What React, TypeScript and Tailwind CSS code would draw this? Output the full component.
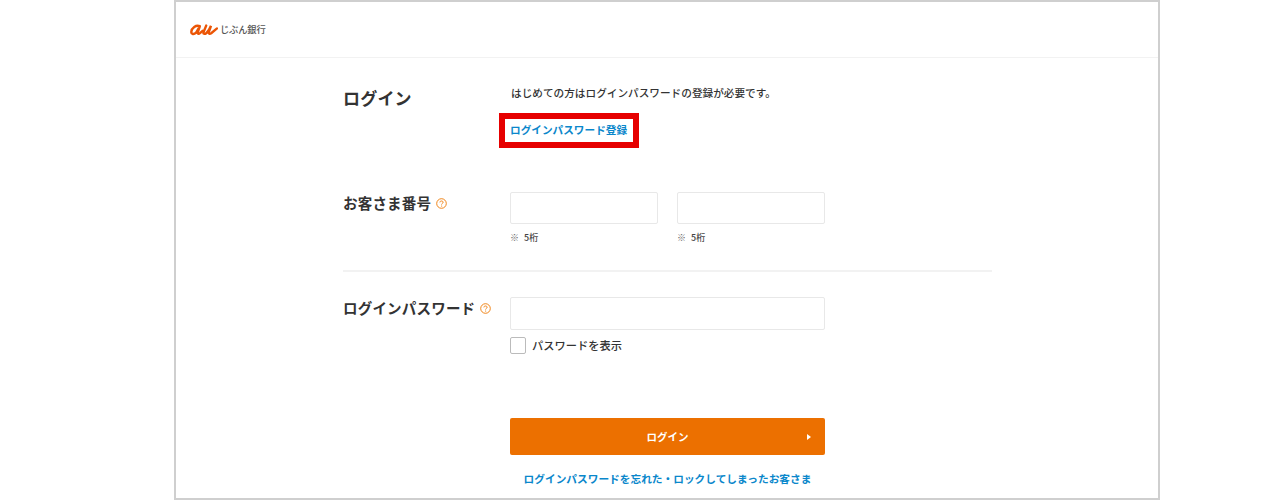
const FONT = "font-['Noto_Sans_CJK_JP','Noto_Sans_CJK_SC',sans-serif]"

function HelpIcon() {
  return (
    <svg width="11" height="11" viewBox="0 0 11 11" fill="none" className="ml-[5px] mt-[1px] shrink-0">
      <circle cx="5.5" cy="5.5" r="4.8" stroke="#ee7800" strokeWidth="0.9" />
      <path d="M3.9 4.4c0-.9.7-1.4 1.6-1.4s1.6.5 1.6 1.3c0 1.1-1.5 1.1-1.5 2.2" stroke="#ee7800" strokeWidth="0.9" />
      <circle cx="5.6" cy="8" r="0.6" fill="#ee7800" />
    </svg>
  )
}

function AuLogo() {
  return (
    <svg width="28" height="12" viewBox="0 0 28 12" fill="none">
      <path d="M9.8 2.2C6 .6 1.6 3.8 1.3 7.8c-.2 2.6 2.6 3 4.8.8L9.8 2.4 7.8 8c-.6 1.8.8 2.4 2.2 1.2l2.6-2.4" stroke="#eb5505" strokeWidth="2.4" strokeLinecap="round" />
      <path d="M16.2 1.6 13.6 8c-.7 1.8 1 2.4 2.6 1.2 1.8-1.4 3.6-4.4 4.8-7.4L18.8 8c-.6 1.8 1 2.2 2.4 1.2L27 4.4" stroke="#eb5505" strokeWidth="2.4" strokeLinecap="round" />
    </svg>
  )
}

export default function App() {
  return (
    <div className={`h-[500px] w-full overflow-hidden bg-white ${FONT}`}>
      <div className="ml-[174px] h-[500px] w-[986px] border-2 border-[#cfcfcf] text-[#333]">
        {/* Header */}
        <div className="flex h-[56px] items-center border-b border-[#f2f2f2] pl-[14px] pt-[1px]">
          <AuLogo />
          <span className="ml-[2px] text-[9.3px] font-medium leading-none tracking-[-0.2px] text-[#555]">じぶん銀行</span>
        </div>

        <div className="pl-[167px]">
          {/* Title */}
          <div className="flex pt-[27px]">
            <h1 className="w-[167px] text-[17px] font-bold leading-[26px] tracking-[0.2px]">ログイン</h1>
            <div>
              <p className="ml-[1px] text-[10.65px] font-medium leading-[16px]">はじめての方はログインパスワードの登録が必要です。</p>
              <a className="-ml-[11px] mt-[12px] block h-[35px] w-[140px] border-[6px] border-[#e60000] pl-[5px] text-[10.65px] font-bold leading-[21px] text-[#0a87cb]">ログインパスワード登録</a>
            </div>
          </div>

          {/* Customer number */}
          <div className="mt-[44px] flex">
            <div className="flex w-[167px] items-start pt-[1px]">
              <span className="text-[14.5px] font-bold leading-[20px] tracking-[0.2px]">お客さま番号</span>
              <span className="mt-[4px]"><HelpIcon /></span>
            </div>
            <div className="flex gap-[19px]">
              {[0, 1].map((i) => (
                <div key={i}>
                  <div className="h-[32px] w-[148px] rounded-[2px] border border-[#e8e8e8]" />
                  <p className="mt-[6px] flex text-[9px] font-medium leading-[16px] text-[#444]">
                    <span className="text-[#666]">※</span><span className="ml-[5px]">5桁</span>
                  </p>
                </div>
              ))}
            </div>
          </div>

          <hr className="mt-[24px] w-[649px] border-t-2 border-[#f2f2f2]" />

          {/* Password */}
          <div className="mt-[25px] flex">
            <div className="flex w-[167px] items-start pt-[1px]">
              <span className="text-[14.5px] font-bold leading-[20px] tracking-[0.2px]">ログインパスワード</span>
              <span className="mt-[4px]"><HelpIcon /></span>
            </div>
            <div>
              <div className="h-[33px] w-[315px] rounded-[2px] border border-[#e8e8e8]" />
              <label className="mt-[7px] flex items-center">
                <span className="h-[17px] w-[16px] rounded-[2px] border border-[#bbb]" />
                <span className="ml-[6px] text-[11.25px] font-medium leading-[17px]">パスワードを表示</span>
              </label>
            </div>
          </div>

          {/* Submit */}
          <div className="ml-[167px] mt-[64px] w-[315px]">
            <button className="relative block h-[37px] w-full rounded-[2px] bg-[#ec7000] text-[10.5px] font-bold text-white">
              ログイン
              <span className="absolute right-[14px] top-[16px] h-0 w-0 border-y-[3px] border-l-[4px] border-y-transparent border-l-white" />
            </button>
            <a className="mt-[14px] block text-center text-[10.7px] font-bold leading-[20px] text-[#0a87cb]">ログインパスワードを忘れた・ロックしてしまったお客さま</a>
          </div>
        </div>
      </div>
    </div>
  )
}
